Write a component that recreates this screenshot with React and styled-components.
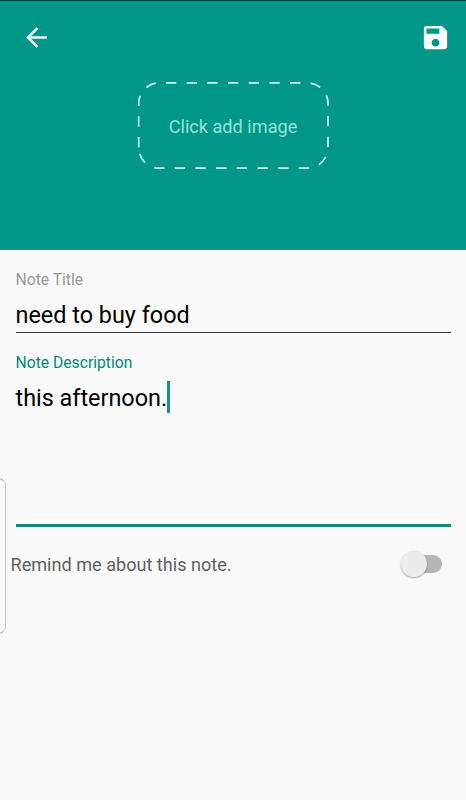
import React, { useState } from 'react';
import styled, { createGlobalStyle } from 'styled-components';

function NotePage() {
  const [title, setTitle] = useState('need to buy food');
  const [description] = useState('this afternoon.');
  const [remind, setRemind] = useState(false);

  return (
    <Container>
      <Header>
        <Toolbar>
          <IconButton aria-label="Back">
            <svg width="31" height="31" viewBox="0 0 24 24" fill="#e9fffb">
              <path d="M20 11H7.83l5.59-5.59L12 4l-8 8 8 8 1.41-1.41L7.83 13H20v-2z" />
            </svg>
          </IconButton>
          <IconButton aria-label="Save">
            <svg width="31" height="31" viewBox="0 0 24 24" fill="#fff">
              <path d="M17 3H5c-1.11 0-2 .9-2 2v14c0 1.1.89 2 2 2h14c1.1 0 2-.9 2-2V7l-4-4zm-5 16c-1.66 0-3-1.34-3-3s1.34-3 3-3 3 1.34 3 3-1.34 3-3 3zm3-10H5V5h10v4z" />
            </svg>
          </IconButton>
        </Toolbar>
        <ImagePicker>
          <DashedOutline width="192" height="89" viewBox="0 0 192 89">
            <path d="M1.7 66.4V22.4a20.5 20.5 0 0 1 20.5-20.5H170.5a20.5 20.5 0 0 1 20.5 20.5V66.7a20.5 20.5 0 0 1-20.5 20.5H22.2a20.5 20.5 0 0 1-20.5-20.5" />
          </DashedOutline>
          Click add image
        </ImagePicker>
      </Header>
      <Form>
        <Label>Note Title</Label>
        <TitleInput value={title} onChange={(e) => setTitle(e.target.value)} />
        <Label $active>Note Description</Label>
        <Description>
          <span>{description}</span>
          <Caret />
        </Description>
      </Form>
      <ReminderRow>
        <span>Remind me about this note.</span>
        <Switch role="switch" aria-checked={remind} onClick={() => setRemind(!remind)}>
          <Thumb $on={remind} />
        </Switch>
      </ReminderRow>
      <EdgeHandle />
    </Container>
  );
}

const GlobalStyle = createGlobalStyle`
  * {
    box-sizing: border-box;
  }

  body {
    margin: 0;
    background: #fafafa;
    font-family: Roboto, sans-serif;
  }
`;

const Container = styled.div`
  position: relative;
  height: 800px;
  overflow: hidden;
  background: #fafafa;
`;

const Header = styled.header`
  display: flex;
  flex-direction: column;
  align-items: center;
  height: 250px;
  border-top: 1px solid #00453d;
  background: #009788;
`;

const Toolbar = styled.div`
  display: flex;
  justify-content: space-between;
  align-items: center;
  width: 100%;
  height: 73px;
  padding: 0 15px 0 21px;
`;

const IconButton = styled.button`
  display: flex;
  padding: 0;
  border: none;
  background: none;
  cursor: pointer;
`;

const ImagePicker = styled.div`
  position: relative;
  display: flex;
  justify-content: center;
  align-items: center;
  width: 192px;
  height: 89px;
  margin-top: 7px;
  padding-top: 1px;
  color: #92e3da;
  font-size: 18.15px;
  cursor: pointer;
`;

const DashedOutline = styled.svg`
  position: absolute;
  top: 0;
  left: 0;
  fill: none;
  stroke: #c6f8f2;
  stroke-width: 1.7;
  stroke-dasharray: 10.4 10.28;
`;

const Form = styled.div`
  display: flex;
  flex-direction: column;
  padding: 20px 15px 0 15.5px;
`;

const Label = styled.label`
  height: 20px;
  color: ${(props) => (props.$active ? '#00897b' : '#989898')};
  font-size: 15.7px;
  line-height: 20px;
`;

const TitleInput = styled.input`
  height: 43px;
  margin-bottom: 20px;
  padding: 8px 0 0;
  border: none;
  border-bottom: 1px solid #333;
  outline: none;
  background: none;
  color: #000;
  font-family: inherit;
  font-size: 23.4px;
`;

const Description = styled.div`
  display: flex;
  align-items: flex-start;
  height: 154px;
  padding-top: 8px;
  border-bottom: 3px solid #148a7c;
  color: #000;
  font-size: 23.4px;
  line-height: 35px;
`;

const Caret = styled.span`
  width: 2.5px;
  height: 32px;
  background: #159485;
`;

const ReminderRow = styled.div`
  display: flex;
  justify-content: space-between;
  align-items: center;
  height: 40px;
  margin-top: 17px;
  padding: 0 24px 0 10.5px;
  color: #606060;
  font-size: 18.1px;
`;

const Switch = styled.button`
  display: flex;
  align-items: center;
  width: 38px;
  height: 18px;
  padding: 0;
  border: none;
  border-radius: 9px;
  background: #b6b6b6;
  cursor: pointer;
`;

const Thumb = styled.span`
  flex: none;
  width: 26px;
  height: 26px;
  margin-left: ${(props) => (props.$on ? '16px' : '-3px')};
  border-radius: 50%;
  background: #ececec;
  box-shadow: 0 1px 2px rgba(0, 0, 0, 0.35);
`;

const EdgeHandle = styled.div`
  position: absolute;
  top: 478px;
  left: -12px;
  width: 18px;
  height: 156px;
  border: 1px solid #aaa;
  border-right: 1.5px solid #ccc;
  border-radius: 8px;
`;

function App() {
  return (
    <>
      <GlobalStyle />
      <NotePage />
    </>
  );
}

export default App;
